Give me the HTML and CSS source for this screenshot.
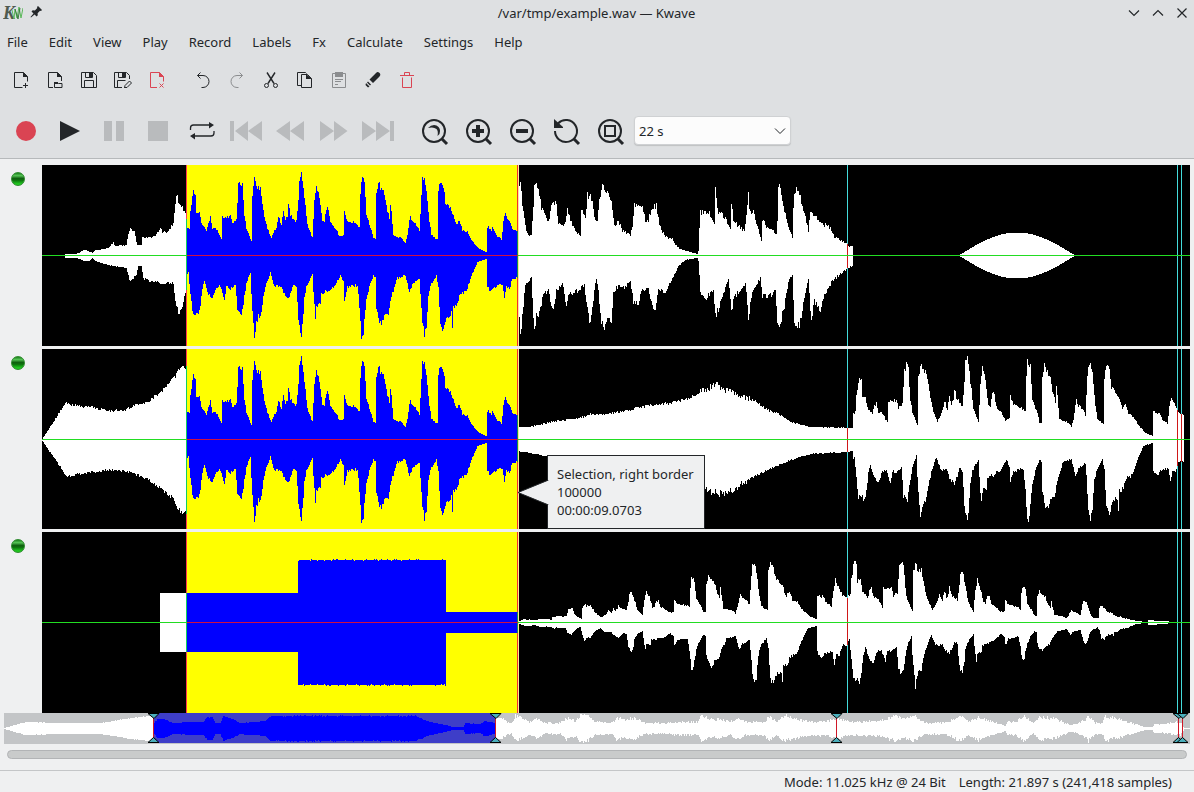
FILE: index.html
```html
<!DOCTYPE html>
<html lang="en">
<head>
<meta charset="utf-8">
<title>/var/tmp/example.wav — Kwave</title>
<link rel="stylesheet" href="styles.css">
</head>
<body>
<div class="window">
  <header class="chrome">
    <div class="titlebar">
      <div class="title-left">
        <svg class="logo" viewBox="0 0 20 18" aria-label="Kwave"><text class="logo-letter" x="0" y="15">K</text><path d="M9 6l2 9 1-10 2 9 2-11 2 11 2-10" fill="none" stroke="#5cb85c"/><path d="M12 5l3 10 2-11" fill="none" stroke="#3b7d3f"/></svg>
        <button class="plain" aria-label="Keep above"><svg width="13" height="13" viewBox="0 0 13 13"><path d="M8 1l4 4-1 1-1-.3-2.4 2.6.2 2-1.200 1.200-2-2L1 12.500.500 12l3-3.600-2-2 1.200-1.200 2.200.2L7.300 3 7 2z" fill="#232629"/></svg></button>
      </div>
      <h1 class="title">/var/tmp/example.wav — Kwave</h1>
      <div class="title-right">
        <button class="plain" aria-label="Minimize"><svg class="wm" viewBox="0 0 12 12"><path d="M1 3.500l5 5 5-5"/></svg></button>
        <button class="plain" aria-label="Maximize"><svg class="wm" viewBox="0 0 12 12"><path d="M1 8.500l5-5 5 5"/></svg></button>
        <button class="plain" aria-label="Close"><svg class="wm" viewBox="0 0 12 12"><path d="M1.500 1.500l9 9M10.500 1.500l-9 9"/></svg></button>
      </div>
    </div>
    <nav class="menubar">
      <button class="plain">File</button><button class="plain">Edit</button><button class="plain">View</button><button class="plain">Play</button><button class="plain">Record</button><button class="plain">Labels</button><button class="plain">Fx</button><button class="plain">Calculate</button><button class="plain">Settings</button><button class="plain">Help</button>
    </nav>
    <div class="toolbar small">
      <div class="group">
        <button class="plain" aria-label="New"><svg viewBox="0 0 22 22"><path d="M12.500 18.500h-8v-15h9l4 4v5M15.500 14v5M13 16.500h5"/><path class="f" d="M13 3v5h5z"/></svg></button>
        <button class="plain" aria-label="Open"><svg viewBox="0 0 22 22"><path d="M9 18.500H4.500v-15h9l4 4V12"/><path class="f" d="M13 3v5h5z"/><path d="M10.500 13.500h3l1 1h3.500v4h-7.500z"/><path class="f" d="M10 13h4v2h-4z"/></svg></button>
        <button class="plain" aria-label="Save"><svg viewBox="0 0 22 22"><path d="M3.500 3.500h12l3 3v12h-15zM7.500 3.500v5h7v-5M6.500 18.500v-7h9v7"/><path class="f" d="M11 4h3v4h-3z"/></svg></button>
        <button class="plain" aria-label="Save as"><svg viewBox="0 0 22 22"><path d="M10 18.500H2.500v-15h12l3 3V10M6.500 3.500v5h7v-5M5.500 18.500v-7h8M13 18.500l-.5.500.5-2.500 4.500-4.500 2 2-4.500 4.500z"/><path class="f" d="M10 4h3v4h-3z"/></svg></button>
        <button class="plain red" aria-label="Close file"><svg viewBox="0 0 22 22"><path d="M11 18.500H4.500v-15h9l4 4v5M13.500 14.500l4 4M17.500 14.500l-4 4"/><path class="f" d="M13 3v5h5z"/></svg></button>
      </div>
      <div class="group">
        <button class="plain" aria-label="Undo"><svg viewBox="0 0 22 22"><path d="M8.500 3.500L5.500 6.500 8.500 9.500M5.500 6.500h5.500a6 6 0 0 1 0 12H9.500"/></svg></button>
        <button class="plain dim" aria-label="Redo" disabled><svg viewBox="0 0 22 22"><path d="M13.500 3.500L16.500 6.500 13.500 9.500M16.500 6.500H11a6 6 0 0 0 0 12h1.500"/></svg></button>
        <button class="plain" aria-label="Cut"><svg viewBox="0 0 22 22"><path stroke-width="1.400" d="M7 3.500l7 11M15 3.500l-7 11"/><circle cx="6.500" cy="16.500" r="2"/><circle cx="15.500" cy="16.500" r="2"/></svg></button>
        <button class="plain" aria-label="Copy"><svg viewBox="0 0 22 22"><path d="M7.500 16.500h-4v-13h8l1 1M7.500 5.500h6l4 4v9h-10z"/><path class="f" d="M12 5v5h6z"/></svg></button>
        <button class="plain dim" aria-label="Paste" disabled><svg viewBox="0 0 22 22"><path d="M4.500 4.500h13v14h-13zM7 10.500h8M7 12.500h6M7 15.500h3"/><path class="f" d="M7 3h8v5H7z"/></svg></button>
        <button class="plain" aria-label="Erase selection"><svg viewBox="0 0 22 22"><path class="f" d="M14 4q1.500-1.500 3-.5l1 1q1 1.500-.5 3L11 14l-3.500-3.500zM6 12.500L9 15.500 8 16.500 5 13.500zM4 14l3.500 3.500L6 18.500 3.500 16z"/></svg></button>
        <button class="plain red" aria-label="Delete"><svg viewBox="0 0 22 22"><path d="M4 6.500h14M8.500 6V3.500h5V6M6.500 8.500v10h9v-10"/></svg></button>
      </div>
    </div>
    <div class="toolbar large">
      <div class="group">
        <button class="plain" aria-label="Record"><svg viewBox="0 0 32 32"><circle cx="16" cy="16" r="10" fill="#da4453" stroke="none"/></svg></button>
        <button class="plain" aria-label="Play"><svg viewBox="0 0 32 32"><path class="f" d="M6 6l20 10L6 26z"/></svg></button>
        <button class="plain off" aria-label="Pause" disabled><svg viewBox="0 0 32 32"><path class="f" d="M6 6h8v20H6zM18 6h8v20h-8z"/></svg></button>
        <button class="plain off" aria-label="Stop" disabled><svg viewBox="0 0 32 32"><path class="f" d="M6 6h20v20H6z"/></svg></button>
        <button class="plain" aria-label="Loop"><svg viewBox="0 0 32 32"><path d="M4.500 15v-2q0-3 3-3H24M28 16v2q0 3-3 3H8" stroke-width="1.300"/><path class="f" d="M23 7l5 3-5 3.500zM9 18l-5 3 5 3.500z"/></svg></button>
        <button class="plain off" aria-label="Skip to start" disabled><svg viewBox="0 0 32 32"><path class="f" d="M0 6h4v20H0zM18 6v20L5 16zM32 6v20L18 16z"/></svg></button>
        <button class="plain off" aria-label="Rewind" disabled><svg viewBox="0 0 32 32"><path class="f" d="M16 6v20L2 16zM30 6v20L16 16z"/></svg></button>
        <button class="plain off" aria-label="Forward" disabled><svg viewBox="0 0 32 32"><path class="f" d="M2 6v20l14-10zM16 6v20l13.500-10z"/></svg></button>
        <button class="plain off" aria-label="Skip to end" disabled><svg viewBox="0 0 32 32"><path class="f" d="M0 6v20l14-10zM14 6v20l14-10zM28 6h4v20h-4z"/></svg></button>
      </div>
      <div class="group">
        <button class="plain" aria-label="Zoom to selection"><svg class="z" viewBox="0 0 32 32"><circle cx="15" cy="16" r="11"/><path d="M23 24l5 5" stroke-width="3"/><path class="f" d="M9 13q4-4 8.500-2.500 5 2.500 3 8.500l-2 2q1-5-1-7-3-2.500-8.500-1z"/></svg></button>
        <button class="plain" aria-label="Zoom in"><svg class="z" viewBox="0 0 32 32"><circle cx="15" cy="16" r="11"/><path d="M23 24l5 5" stroke-width="3"/><path d="M15 10v12M9 16h12" stroke-width="4"/></svg></button>
        <button class="plain" aria-label="Zoom out"><svg class="z" viewBox="0 0 32 32"><circle cx="15" cy="16" r="11"/><path d="M23 24l5 5" stroke-width="3"/><path d="M9 16h12" stroke-width="4"/></svg></button>
        <button class="plain" aria-label="Zoom normal"><svg class="z" viewBox="0 0 32 32"><path d="M7 8.500A11 11 0 1 1 4 16"/><path d="M23 24l5 5" stroke-width="3"/><path class="f" d="M3 4l9 8v1H3z"/></svg></button>
        <button class="plain" aria-label="Zoom to all"><svg class="z" viewBox="0 0 32 32"><circle cx="15" cy="16" r="11"/><path d="M23 24l5 5" stroke-width="3"/><path d="M10 11h10v10H10z"/></svg></button>
      </div>
      <label class="zoom">
        <select aria-label="Visible time"><option>22 s</option></select>
        <svg viewBox="0 0 12 12"><path d="M1 3.500l5 5 5-5"/></svg>
      </label>
    </div>
  </header>

  <main class="signal">
    <section class="track">
      <button class="led" aria-label="Track 1 enabled"></button>
      <svg class="wave" data-track="0" viewBox="42 0 1148 181" preserveAspectRatio="none" role="img" aria-label="Track 1"></svg>
    </section>
    <section class="track">
      <button class="led" aria-label="Track 2 enabled"></button>
      <svg class="wave" data-track="1" viewBox="42 0 1148 181" preserveAspectRatio="none" role="img" aria-label="Track 2"></svg>
      <div class="tip" role="tooltip">
        <svg viewBox="0 0 31 25"><path d="M31 0L0 12.500 31 25z" fill="#eff0f1"/><path d="M30.500 0L0 12.500 30.500 25" fill="none" stroke="#232629"/></svg>
        <p>Selection, right border</p><p>100000</p><p>00:00:09.0703</p>
      </div>
    </section>
    <section class="track">
      <button class="led" aria-label="Track 3 enabled"></button>
      <svg class="wave" data-track="2" viewBox="42 0 1148 181" preserveAspectRatio="none" role="img" aria-label="Track 3"></svg>
    </section>
  </main>
  <svg class="overview" viewBox="4 0 1186 31" preserveAspectRatio="none" role="img" aria-label="Overview"></svg>
  <div class="scrollbar" role="scrollbar" aria-label="Position" aria-valuenow="0"></div>
  <footer class="status"><span>Mode: 11.025 kHz @ 24 Bit</span><span>Length: 21.897 s (241,418 samples)</span></footer>
</div>
<script src="wave.js"></script>
</body>
</html>
```
FILE: styles.css
```css
* { box-sizing: border-box; }
body {
  margin: 0;
  font: 13px/18px "Noto Sans", sans-serif;
  color: #232629;
  background: #eff0f1;
}
.window { display: flex; flex-direction: column; height: 100vh; min-height: 620px; }
.chrome { background: #dee0e2; border-bottom: 1px solid #b6b9bb; }
.plain {
  display: block;
  padding: 0;
  border: 0;
  background: none;
  font: inherit;
  color: inherit;
}
.titlebar {
  display: grid;
  grid-template-columns: 1fr auto 1fr;
  align-items: center;
  height: 26px;
  padding: 0 6px 0 3px;
}
.title { margin: 0; padding-left: 2px; font: inherit; }
.title-left { display: flex; align-items: center; gap: 7px; }
.title-right { display: flex; justify-content: flex-end; gap: 12px; }
.logo { width: 20px; height: 18px; }
.logo-letter { font: italic bold 18px "Liberation Serif", serif; fill: #4f5a50; }
.wm { display: block; width: 12px; height: 12px; fill: none; stroke: #232629; stroke-width: 1.2; }
.menubar { display: flex; align-items: center; gap: 21px; height: 31px; padding: 1px 7px 0; }
.toolbar { display: flex; align-items: center; padding: 0 10px; }
.toolbar svg { display: block; fill: none; stroke: currentColor; }
.toolbar .f { fill: currentColor; stroke: none; }
.group { display: flex; gap: 12px; }
.small { height: 46px; gap: 24px; }
.small svg { width: 22px; height: 22px; }
.large { height: 55px; }
.large .group svg { width: 32px; height: 32px; }
.large .group + .group { margin-left: 25px; }
.large .group .z { stroke-width: 2; }
.red { color: #da4453; }
.dim { color: #8b8d8f; }
.off { color: #b9bbbd; }
.zoom { position: relative; margin-left: 7px; }
.zoom select {
  display: block;
  appearance: none;
  width: 157px;
  height: 29px;
  padding: 0 4px;
  border: 1px solid #cfd1d3;
  border-radius: 4px;
  background: #fcfcfc;
  box-shadow: 0 1px 1px #bfc1c3;
  font: inherit;
  color: inherit;
}
.zoom svg { position: absolute; right: 5px; top: 9px; width: 12px; height: 12px; pointer-events: none; }
.signal {
  flex: 1;
  min-height: 0;
  display: grid;
  grid-template-rows: repeat(3, minmax(0, 1fr));
  gap: 3px;
  padding: 6px 4px 0 0;
}
.track {
  position: relative;
  display: grid;
  grid-template-columns: 14px minmax(0, 1fr);
  grid-template-rows: minmax(0, 1fr);
  gap: 17px;
  min-height: 0;
  padding-left: 11px;
}
.led {
  width: 14px;
  height: 14px;
  margin-top: 7px;
  padding: 0;
  border: 1px solid #2c8a2c;
  border-radius: 50%;
  background: linear-gradient(#1d801d, #55c455 22%, #106010 45%, #0c700c 60%, #20c820 90%);
}
.wave { display: block; width: 100%; height: 100%; background: #000; shape-rendering: crispEdges; }
.wave .line { fill: none; stroke-width: 1; vector-effect: non-scaling-stroke; }
.axis { stroke: #22dd22; }
.axis-selected { stroke: #d01040; }
.marker { stroke: #44dcdc; }
.marker-over { stroke: #d01818; }
.left { stroke: #ff3c50; }
.left-over { stroke: #10d060; }
.right { stroke: #f03030; }
.right-over { stroke: #109050; }
.tip {
  position: absolute;
  left: 547px;
  top: 106px;
  width: 158px;
  height: 74px;
  padding: 9px;
  border: 1px solid #232629;
  background: #eff0f1;
}
.tip p { margin: 0; white-space: nowrap; }
.tip svg { position: absolute; left: -30px; top: 24px; width: 31px; height: 25px; }
.overview { display: block; flex: none; height: 31px; margin: 0 4px; background: #c3c5c7; }
.scrollbar {
  flex: none;
  height: 9px;
  margin: 6px 7px 11px;
  border: 1px solid #b2b4b6;
  border-radius: 5px;
  background: #c9cbcb;
}
.status {
  flex: none;
  display: flex;
  justify-content: flex-end;
  gap: 13px;
  height: 22px;
  padding: 2px 22px 0 8px;
  border-top: 1px solid #c4c6c8;
}
```
FILE: wave.js
```js
// Envelopes are lists of [position, height] pairs, above and below the zero line.
const parse = s => s.split(" ").map(p => p.split(":").map(Number));

const voiceTop = parse("0:26 3:27 4:45 5:50 6:58 7:64 9:58 10:42 13:43 15:32 18:28 20:25 22:33 24:37 26:27 30:26 35:16 36:38 44:39 46:31 50:35 51:50 52:69 54:73 56:70 58:40 60:27 65:14 66:62 68:75 69:75 70:67 74:67 76:54 78:40 81:27 85:17 90:28 92:38 95:30 97:43 99:35 101:40 102:51 104:40 110:33 112:55 113:76 115:80 116:74 119:49 121:30 126:17 128:53 130:71 133:57 136:33 138:33 140:47 142:45 144:32 150:25 153:19 157:20 158:42 161:35 171:30 173:27 174:60 175:77 178:72 180:40 185:25 187:16 189:16 190:63 192:74 195:66 198:63 200:48 203:37 204:53 207:20 215:17 219:12 221:20 224:40 226:33 230:30 233:23 235:62 236:74 238:77 240:65 243:33 245:20 251:15 252:62 254:75 257:68 259:53 265:45 270:30 273:35 276:25 281:23 285:15 293:6 300:3 301:27 302:28 305:25 306:27 311:18 315:16 317:32 319:43 322:35 326:27 331:24");
const voiceBottom = parse("0:21 2:16 4:38 6:56 10:57 12:61 14:51 16:33 18:25 20:33 23:40 26:42 30:31 34:30 38:43 40:31 44:33 47:30 49:28 51:56 55:60 58:41 60:28 64:16 65:38 67:68 68:80 70:68 72:60 74:60 77:41 80:28 84:17 88:30 95:30 97:38 102:43 105:36 107:28 110:31 112:66 115:78 117:61 118:41 120:31 126:19 127:38 129:63 130:51 134:48 135:38 141:35 148:30 154:20 157:26 158:43 161:31 171:29 173:50 175:81 177:76 180:45 183:31 187:20 189:21 190:51 193:65 195:69 198:60 202:56 205:40 208:31 210:23 219:19 221:28 223:38 226:28 233:23 235:51 236:68 238:78 240:71 242:41 244:30 250:19 252:31 254:68 257:75 260:61 265:58 266:71 267:51 271:48 274:38 280:35 285:20 291:6 300:3 301:30 304:36 308:31 316:28 318:41 320:31 323:33 326:22 331:22");
const introTop = parse("65:1 76:1 80:3 83:5 88:4 92:2 95:5 108:7 113:12 115:9 126:10 129:26 134:23 137:10 141:10 142:17 155:19 160:27 162:23 168:23 173:32 174:40 175:50 176:61 180:50 184:45 187:32");
const introBottom = parse("65:2 76:2 84:5 89:5 92:2 95:5 108:9 126:12 129:24 132:23 136:18 138:10 141:10 143:22 153:26 163:27 173:27 175:48 178:57 182:50 187:30");
const midTop = parse("518:60 519:67 520:77 522:50 525:28 528:20 531:20 533:50 534:72 538:68 541:48 544:45 548:33 552:53 556:50 558:32 564:30 567:45 570:35 575:25 580:20 581:45 585:35 587:60 591:57 595:35 597:32 599:55 602:70 603:72 607:62 610:57 612:45 614:28 618:35 622:25 630:20 632:30 634:50 638:50 642:48 645:35 648:35 652:48 656:50 659:30 665:18 672:16 675:10 680:6 690:3 697:1 698:4 699:28 700:42 709:42 714:30 715:66 717:45 724:38 730:27 731:53 733:35 742:25 744:25 746:40 748:62 749:45 753:43 758:25 761:15 762:36 766:28 776:22 777:35 778:65 780:70 783:48 788:28 792:17 793:45 794:65 798:65 803:45 808:25 810:45 815:38 820:32 830:28 834:18 847:11 848:9 853:9");
const midBottom = parse("518:60 519:65 520:82 522:60 525:30 531:20 533:62 534:72 536:60 540:55 543:38 548:35 552:55 556:35 562:28 566:48 569:38 577:35 584:28 587:55 590:67 592:50 596:22 598:35 600:60 604:78 607:60 611:65 613:35 618:30 625:32 630:25 633:45 638:47 642:33 648:33 651:45 654:56 658:35 665:35 668:30 673:20 678:10 685:4 697:2 698:5 700:35 705:43 713:35 715:60 720:48 728:22 731:53 735:40 745:27 748:60 752:38 760:22 762:40 770:40 775:35 777:65 780:68 784:50 788:25 792:20 794:68 797:75 802:55 808:22 810:55 811:65 814:45 820:53 826:35 832:25 847:12 853:10");
const humTop = parse("42:0 65:36 70:34 90:32 108:28 125:29 135:34 145:36 155:43 165:51 173:60 180:70 184:72 187:74");
const humBottom = parse("42:1 66:36 85:33 105:30 125:31 145:38 160:48 172:58 177:70 187:74");
const swellTop = parse("518:12 530:12 550:17 580:21 590:25 600:24 625:28 650:34 670:36 690:41 700:48 705:50 718:54 722:50 740:43 755:38 765:30 778:25 790:17 810:12 853:11");
const swellBottom = parse("518:11 540:15 580:22 625:29 660:36 690:45 718:53 730:52 740:45 760:33 790:20 810:14 847:12 853:11");
const overview = parse("4:0 25:6 60:5 100:5 125:9 140:11 153:13 154:5 157:9 164:9 172:5 190:6 203:6 207:11 212:11 215:5 220:5 223:12 232:9 240:5 265:7 270:12 415:12 420:10 430:6 445:3 452:1 463:1 465:5 480:4 484:7 495:5 496:12 500:11 505:7 511:4 515:12 522:9 530:6 536:9 545:5 560:5 566:10 575:7 580:12 587:12 594:6 612:5 616:10 625:8 634:10 645:5 665:5 680:6 698:6 701:12 712:8 720:9 730:6 737:10 745:6 764:6 768:12 776:6 784:12 800:8 812:6 828:7 836:10 850:6 880:7 895:12 905:9 913:12 925:5 945:5 960:12 968:6 978:11 990:7 1005:2 1007:6 1015:6 1024:12 1033:5 1040:11 1055:9 1070:3 1076:4 1085:8 1088:12 1095:5 1102:5 1105:12 1120:8 1145:1 1152:1 1154:4 1165:4 1175:6 1180:6 1184:0 1190:0");

const at = (env, x) => {
  const i = env.findIndex(p => p[0] >= x);
  if (i < 0) return 0;
  if (i === 0) return env[0][0] === x ? env[0][1] : 0;
  const [x0, h0] = env[i - 1], [x1, h1] = env[i];
  return h0 + (h1 - h0) * (x - x0) / (x1 - x0);
};
const jitter = (x, h, amount) => {
  const n = Math.sin(x * 12.9898 + h) * 43758.5453;
  return Math.max(0, h + h * (n - Math.floor(n) - 0.5) * amount);
};
const voice = (x, start, gain) => [at(voiceTop, x - start) * gain, at(voiceBottom, x - start) * gain, 0.1];

const tracks = [
  x => {
    if (x < 187) return [at(introTop, x), at(introBottom, x), 0.12];
    if (x < 518) return voice(x, 186, 1);
    if (x < 853) return [at(midTop, x), at(midBottom, x), 0.14];
    if (x < 960 || x > 1073) return [0, 0, 0];
    const h = 22.5 * Math.sin(Math.PI * (x - 959) / 115);
    return [h, h, 0];
  },
  x => {
    if (x < 187) return [at(humTop, x), at(humBottom, x), 0.08];
    if (x < 518) return voice(x, 186, 1);
    if (x < 853) return [at(swellTop, x), at(swellBottom, x), x > 690 && x < 750 ? 0.14 : 0.08];
    return voice(x, 852, 1);
  },
  x => {
    if (x < 160) return [0, 0, 0];
    if (x < 298) return [29, 29, 0.02];
    if (x < 446) return [62, 62, 0.02];
    if (x < 518) return [10, 10, 0];
    if (x < 848) return voice(x, 516, Math.min(1, (x - 510) / 320));
    return voice(x, 847, Math.max(0, 1 - (x - 847) / 326));
  }
];

function columns(from, to, mid, shape) {
  let d = "";
  for (let x = from; x < to; x++) {
    const [up, down, noise] = shape(x);
    const t = Math.round(jitter(x, up, noise)), b = Math.round(jitter(x + 7, down, noise));
    if (t + b > 0) d += `M${x} ${mid - t}h1V${mid + 1 + b}h-1z`;
  }
  return d;
}
const rect = (x, y, w, h, fill) => `<rect x="${x}" y="${y}" width="${w}" height="${h}" fill="${fill}"/>`;
const stroke = (d, name) => `<path d="${d}" class="line ${name}"/>`;

document.querySelectorAll(".wave").forEach(svg => {
  const shape = tracks[svg.dataset.track], mid = 90;
  // A thin upright line that changes colour where it crosses the signal.
  const upright = (x, name) => {
    const [t, b] = shape(x).map(Math.round);
    return stroke(`M${x + 0.5} 0V181`, name) + (t + b > 0 ? stroke(`M${x + 0.5} ${mid - t}V${mid + b + 1}`, name + "-over") : "");
  };
  svg.innerHTML =
    rect(187, 0, 331, 181, "#ffff00") +
    `<path d="${columns(42, 187, mid, shape)}${columns(518, 1190, mid, shape)}" fill="#fff"/>` +
    `<path d="${columns(187, 518, mid, shape)}" fill="#00f"/>` +
    rect(518, 0, 1, 181, "#ffe890") +
    upright(186, "left") +
    upright(517, "right") +
    [847, 1177, 1181].map(x => upright(x, "marker")).join("") +
    stroke(`M42 ${mid + 0.5}H187M518 ${mid + 0.5}H1190`, "axis") +
    stroke(`M187 ${mid + 0.5}H518`, "axis-selected");
});

const flat = x => [at(overview, x), at(overview, x), 0.35];
const smooth = x => [at(overview, x), at(overview, x), 0.1];
const flag = x => rect(x, 4, 1, 23, "#d01828") +
  `<path d="M${x - 5} .500h11l-5 5zM${x - 5} 29.500h11l-5.500-5z" fill="#4aaebb" stroke="#000"/>`;
document.querySelector(".overview").innerHTML =
  rect(153, 0, 342, 30, "#3e3ec8") +
  `<path d="${columns(4, 153, 15, smooth)}${columns(495, 1190, 15, flat)}" fill="#fff"/>` +
  `<path d="${columns(153, 495, 15, smooth)}" fill="#00f"/>` +
  rect(4, 15, 149, 1, "#fff") + rect(495, 15, 695, 1, "#fff") +
  [153, 495, 836, 1178, 1182].map(flag).join("");
```
